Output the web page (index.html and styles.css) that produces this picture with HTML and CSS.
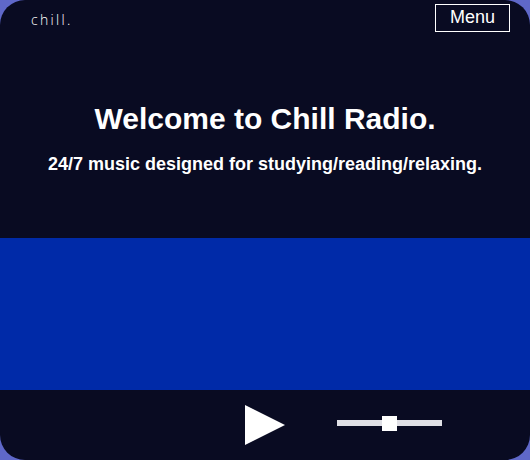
FILE: index.html
```html
<!DOCTYPE html>
<html lang="en">
<head>
<meta charset="utf-8">
<title>Chill Radio</title>
<link rel="stylesheet" href="styles.css">
</head>
<body>
<div class="app">
  <header class="hero">
    <div class="topbar">
      <span class="logo">chill.</span>
      <button class="menu">Menu</button>
    </div>
    <h1>Welcome to Chill Radio.</h1>
    <h2>24/7 music designed for studying/reading/relaxing.</h2>
  </header>
  <main class="stage"></main>
  <footer class="player">
    <svg class="play" width="40" height="40" viewBox="0 0 40 40"><polygon points="0,0 40,20 0,40" fill="#fff"/></svg>
    <div class="slider"><div class="thumb"></div></div>
  </footer>
</div>
</body>
</html>
```
FILE: styles.css
```css
* { box-sizing: border-box; }
html, body { margin: 0; height: 100%; }
body { background: #5f68c9; font-family: "Liberation Sans", Arial, sans-serif; color: #fff; }
.app { width: 530px; height: 460px; display: flex; flex-direction: column; }
.hero { height: 238px; padding: 4px 20px 0 31px; display: flex; flex-direction: column; background: #090b22; border-radius: 25px 25px 0 0; }
.topbar { display: flex; justify-content: space-between; align-items: flex-start; height: 28px; }
.logo { font-family: "Open Sans", sans-serif; font-size: 14px; font-weight: 300; letter-spacing: 2.3px; line-height: 32px; color: #fff; }
.menu { width: 75px; height: 28px; background: transparent; border: 1px solid #fff; color: #fff; font: 18px "Liberation Sans", Arial, sans-serif; padding: 0 0 2px; }
h1 { margin: 70px 0 0 -11px; font-size: 30px; line-height: 34px; text-align: center; font-weight: 700; }
h2 { margin: 18px 0 0 -11px; font-size: 18px; line-height: 20px; text-align: center; font-weight: 700; }
.stage { height: 152px; background: #002aa8; }
.player { height: 70px; display: flex; align-items: flex-start; padding: 15px 0 0 245px; background: #090b22; border-radius: 0 0 25px 25px; }
.slider { width: 105px; height: 6px; margin: 15px 0 0 52px; background: #e0e0e6; display: flex; justify-content: center; align-items: flex-start; }
.thumb { width: 15px; height: 15px; margin-top: -4px; background: #fff; flex: none; }
```
